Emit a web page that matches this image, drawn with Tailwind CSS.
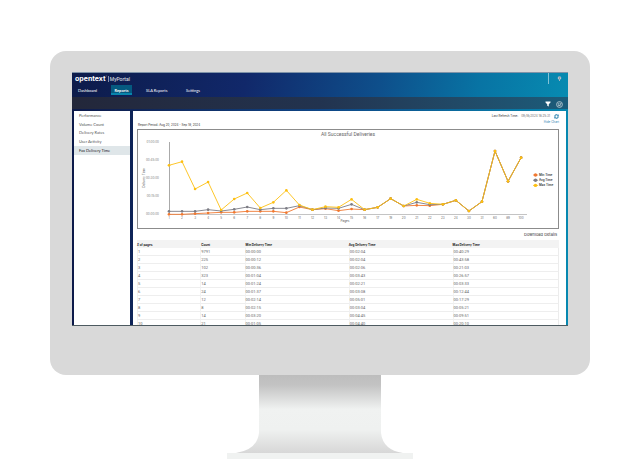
<!DOCTYPE html>
<html lang="en">
<head>
<meta charset="utf-8">
<title>MyPortal – Fax Delivery Time</title>
<script src="https://cdn.jsdelivr.net/npm/@tailwindcss/browser@4"></script>
</head>
<body class="bg-white font-['Inter',sans-serif] text-[3px] leading-[4px] text-[#666]">
<div class="px-[50px] pt-[51px]">
  <div class="rounded-[16px] bg-[#d9d9d9] px-[22px] pt-[21px] pb-[49px]">
    <div class="flex h-[254px] flex-col overflow-hidden border-b border-[#4d5a60] bg-linear-to-r from-[#0d1a4a] via-[#0e4585] to-[#0788b0]">
      <header class="h-[25px] shrink-0 border-t border-[#7f93a8] bg-[linear-gradient(100deg,#0d1b4a_0%,#11286a_35%,#0e4f8b_62%,#0874a4_82%,#078bb1_100%)] text-white">
        <div class="flex h-[11px] items-center justify-between pl-[3px] pr-[6px]">
          <div class="flex items-center gap-px">
            <span class="flex text-[7px] leading-[8px] font-bold">opentext<span class="text-[2px] leading-[4px]">™</span></span>
            <span class="h-[6px] w-px bg-white/50"></span>
            <span class="font-['Roboto',sans-serif] text-[5px] leading-[8px] text-white/90">MyPortal</span>
          </div>
          <div class="flex h-full items-center gap-[8px]">
            <span class="h-full w-px bg-white/50"></span>
            <button aria-label="Account" class="flex">
              <svg class="size-[5px]" viewBox="0 0 10 10"><circle cx="5" cy="4" r="3.6" fill="#b9c4ce"/><path d="M3.5 3.2Q5 1.6 6.3 3.2Q6.3 4.4 5 5V6" fill="none" stroke="#4b5968" stroke-width="1"/><path d="M4 7h2v3H4z" fill="#a9b8c5"/></svg>
            </button>
          </div>
        </div>
        <nav class="grid grid-cols-[33px_21px_51px_40px] items-start justify-start pl-[6px] pt-px font-['Lato',sans-serif] text-[4px] leading-[12px] text-white">
          <a href="#">Dashboard</a>
          <a href="#" class="h-[10px] bg-linear-to-t from-[#0784ac] from-20% to-[#055a80] to-20% text-center font-bold">Reports</a>
          <a href="#" class="pl-[14px]">SLA Reports</a>
          <a href="#" class="pl-[3px]">Settings</a>
        </nav>
      </header>
      <div class="flex h-[12px] shrink-0 items-center justify-end gap-[5px] bg-linear-to-r from-[#23273a] via-[#22334f] to-[#1b5c7a] pr-[5px] pt-[2px]">
        <button aria-label="Filter" class="flex"><svg class="size-[6px]" viewBox="0 0 12 12"><path d="M1 1h10v2L7.5 6.5V11l-3-1.5v-3L1 3z" fill="#fff"/></svg></button>
        <button aria-label="Export" class="flex"><svg class="size-[7px]" viewBox="0 0 12 12" fill="none" stroke="#c3d0d8"><circle cx="6" cy="6" r="5" stroke-width="1.4"/><path d="M3 5l3-1.5 3 1.5-3 3zM3.5 7.5l5 1M4 9l5-5" stroke-width="1"/></svg></button>
      </div>
      <div class="flex min-h-0 flex-1 gap-[3px] px-[2px] pt-[2px]">
        <aside class="w-[56px] shrink-0 bg-white">
          <nav class="flex flex-col pt-px font-['Lato',sans-serif] text-[4px] leading-[8px] text-[#555]">
            <a href="#" class="pl-[5px]">Performance</a>
            <a href="#" class="pl-[5px] leading-[9px]">Volume Count</a>
            <a href="#" class="pl-[5px]">Delivery Rates</a>
            <a href="#" class="pl-[5px] leading-[9px]">User Activity</a>
            <a href="#" class="bg-[#dfe6e9] pl-[5px] leading-[9px] text-[#222]">Fax Delivery Time</a>
          </nav>
        </aside>
        <main class="min-w-0 flex-1 overflow-hidden bg-white pl-[4px] pr-[7px] pt-[2px]">
          <div class="flex items-center justify-end gap-[3px] leading-[6px]">
            <span class="text-[#333]">Last Refresh Time:</span>
            <span>09/18/2024 18:25:31</span>
            <button aria-label="Refresh" class="ml-px flex"><svg class="size-[5px]" viewBox="0 0 10 10" fill="none" stroke="#1878a8" stroke-width="2"><path d="M1 4.5A4 4 0 0 1 8 3M9 5.5A4 4 0 0 1 2 7"/><path d="M9.3 1v3.2H6M.7 9V5.8H4" stroke-width="1.4"/></svg></button>
          </div>
          <div class="pt-px text-right"><a href="#" class="text-[#2f7fb0]">Hide Chart</a></div>
          <p class="h-[5px] pl-px leading-[2px] text-[#333]">Report Period: Aug 20, 2024 - Sep 18, 2024</p>
          <svg class="block w-full" viewBox="0 0 422 100" role="img" aria-label="All Successful Deliveries" id="chart">
            <rect x=".5" y=".5" width="421" height="99" fill="#fff" stroke="#8c8c8c"/>
          </svg>
          <div class="flex justify-end pt-[3px] pr-[2px] text-[4px] leading-[6px]"><a href="#" class="text-[#333]">Download Details</a></div>
          <table class="mt-[2px] w-full table-fixed border-separate border-spacing-0 text-left">
            <colgroup><col class="w-[15%]"><col class="w-[10.5%]"><col class="w-[24.7%]"><col class="w-[24.6%]"><col></colgroup>
            <thead><tr class="h-[8px] bg-[#f3f3f3] text-[#222]"><th class="pt-px">
# of pages</th><th class="pt-px pl-px">Count</th><th class="pt-px pl-px">Min Delivery Time</th><th class="pt-px">Avg Delivery Time</th><th class="pt-px">Max Delivery Time</th></tr></thead>
            <tbody id="rows" class="font-['Roboto',sans-serif] text-[4px]"></tbody>
          </table>
        </main>
      </div>
    </div>
  </div>
  <svg class="mx-auto block w-[188px]" viewBox="0 0 188 86" aria-hidden="true">
    <defs><linearGradient id="neck" x1="0" y1="0" x2="0" y2="1"><stop offset="0" stop-color="#bdbdbd"/><stop offset=".13" stop-color="#c3c3c3"/><stop offset=".44" stop-color="#f0f2f1"/><stop offset=".7" stop-color="#eff1f0"/><stop offset="1" stop-color="#d7d7d7"/></linearGradient></defs>
    <path d="M33 0H155V58Q157 75 177 78H10Q31 75 33 58Z" fill="url(#neck)"/><path d="M1 78H187V84H1Z" fill="#f0f2f1"/>
  </svg>
</div>
<script>
const NS = 'http://www.w3.org/2000/svg';
const chart = document.getElementById('chart');
const add = (tag, attrs, text) => {
  const e = document.createElementNS(NS, tag);
  for (const k in attrs) e.setAttribute(k, attrs[k]);
  if (text) e.textContent = text;
  chart.appendChild(e);
};
add('text', {x: 211, y: 7, 'font-size': 5, 'font-family': 'Roboto, sans-serif', 'text-anchor': 'middle', fill: '#666'}, 'All Successful Deliveries');
add('path', {d: 'M32.5 13V85.5', fill: 'none', stroke: '#aaa'});
add('path', {d: 'M32 85.5H390', fill: 'none', stroke: '#c4c4c4'});
['01:00:00', '00:45:00', '00:30:00', '00:15:00', '00:00:00'].forEach((t, i) =>
  add('text', {x: 22, y: 14 + i * 18, 'font-size': 3, 'text-anchor': 'end', fill: '#777'}, t));
add('text', {transform: 'translate(8 49) rotate(-90)', 'font-size': 3, 'text-anchor': 'middle', fill: '#555'}, 'Delivery Time');
add('text', {x: 208, y: 93, 'font-size': 3, 'text-anchor': 'middle', fill: '#555'}, 'Pages');
const px = i => 32 + i * 13.04;
'1 2 3 4 5 6 7 8 9 10 11 12 13 14 15 16 17 19 20 21 22 23 24 30 31 60 89 100'.split(' ').forEach((t, i) =>
  add('text', {x: px(i), y: 90, 'font-size': 3, 'text-anchor': 'middle', fill: '#666'}, t));

// Heights of each point, in thirds of a chart unit below the title band
const tail = [253, 241, 273, 245, 93, 184, 113];
const series = [
  ['Min Time', '#f07830', [283,283,281,279,277,277,274,274,274,278,261,269,266,272,267,269,262,236,258,256,257,...tail]],
  ['Avg Time', '#7c7c84', [274,274,274,269,273,268,261,269,265,265,257,269,264,265,253,269,262,236,258,247,254,...tail]],
  ['Max Time', '#fdbf12', [136,125,207,186,270,237,219,264,247,211,255,269,260,262,238,269,262,236,258,238,250,...tail]],
];
series.forEach(([name, color, values], s) => {
  const pts = values.map((v, i) => [px(i), v / 3 - 9]);
  add('polyline', {points: pts.join(' '), fill: 'none', stroke: color, 'stroke-width': .9});
  pts.forEach(([x, y]) => add('circle', {cx: x, cy: y, r: 1.3, fill: color}));
  const ly = 46 + s * 5.2;
  add('path', {d: `M396 ${ly}h5`, stroke: color, 'stroke-width': .8});
  add('circle', {cx: 398.5, cy: ly, r: 1.7, fill: color});
  add('text', {x: 402, y: ly + 1, 'font-size': 3, 'font-weight': 600, fill: '#333'}, name);
});

const rows = [
  ['1', '9791', '00:00:00', '00:02:04', '00:40:29'],
  ['2', '225', '00:00:12', '00:02:04', '00:43:58'],
  ['3', '102', '00:00:36', '00:02:06', '00:21:03'],
  ['4', '323', '00:01:04', '00:03:43', '00:26:57'],
  ['5', '14', '00:01:24', '00:02:21', '00:03:33'],
  ['6', '24', '00:01:37', '00:03:08', '00:12:44'],
  ['7', '12', '00:02:14', '00:05:01', '00:17:29'],
  ['8', '8', '00:02:15', '00:03:04', '00:05:21'],
  ['9', '14', '00:03:20', '00:04:45', '00:09:51'],
  ['10', '21', '00:01:05', '00:04:40', '00:20:10'],
];
document.getElementById('rows').innerHTML = rows.map(r =>
  '<tr class="h-[8px]">' + r.map(c => `<td class="border-b border-l border-b-[#eeeeee] border-l-[#f2f2f2] last:border-r last:border-r-[#ececec]">${c}</td>`).join('') + '</tr>').join('');
</script>
</body>
</html>
